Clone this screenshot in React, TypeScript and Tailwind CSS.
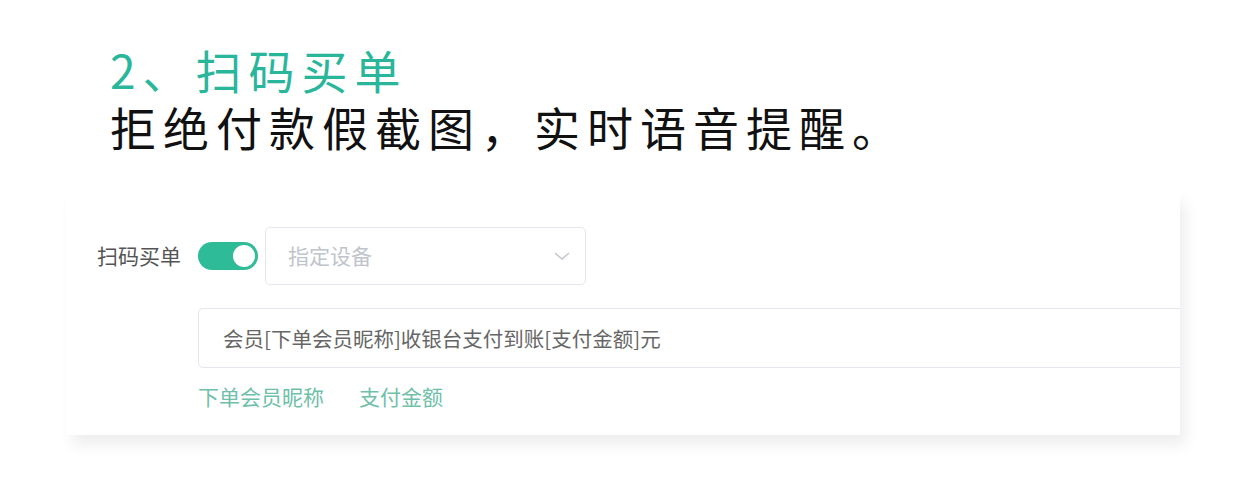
import { useState } from "react"

const cjk = "font-['Noto_Sans_CJK_SC','Noto_Sans',sans-serif]"

function Toggle({ on }: { on: boolean }) {
  return (
    <div
      className={`flex items-center w-[60px] h-[28px] rounded-full px-[3px] ${
        on ? "bg-[#2dbb98] justify-end" : "bg-[#dcdfe6] justify-start"
      }`}
    >
      <div className="w-[22px] h-[22px] rounded-full bg-white" />
    </div>
  )
}

export default function App() {
  const [enabled] = useState(true)
  const tags = ["下单会员昵称", "支付金额"]

  return (
    <div className={`w-[1242px] h-[480px] bg-white overflow-hidden ${cjk}`}>
      {/* Heading */}
      <div className="pl-[110px] pt-[41px] text-[46px] leading-[57px] tracking-[7px]">
        <div className="text-[#29b69b]">2、扫码买单</div>
        <div className="text-[#111]">拒绝付款假截图，实时语音提醒。</div>
      </div>

      {/* Settings card */}
      <div className="ml-[66px] mt-[38px] w-[1114px] h-[242px] bg-white overflow-hidden shadow-[6px_10px_14px_rgba(0,0,0,0.07)] pl-[31px] pt-[34px]">
        <div className="flex items-center h-[58px]">
          <span className="text-[21px] text-[#555] w-[101px]">扫码买单</span>
          <Toggle on={enabled} />
          <div className="ml-[7px] w-[321px] h-[58px] border border-[#e4e7ed] rounded-[5px] flex items-center justify-between pl-[22px] pr-[14px]">
            <span className="text-[21px] text-[#c0c4cc]">指定设备</span>
            <svg width="18" height="18" viewBox="0 0 18 18" fill="none">
              <path d="M2 6l7 6 7-6" stroke="#c0c4cc" strokeWidth="1.4" />
            </svg>
          </div>
        </div>

        <div className="ml-[101px] mt-[23px] w-[1100px] h-[60px] border border-[#e4e7ed] rounded-[5px] flex items-center pl-[24px]">
          <span className="text-[20.5px] text-[#666]">会员[下单会员昵称]收银台支付到账[支付金额]元</span>
        </div>

        <div className="ml-[101px] mt-[13px] flex gap-[35px]">
          {tags.map((t) => (
            <span key={t} className="text-[21px] text-[#6fc0a8]">
              {t}
            </span>
          ))}
        </div>
      </div>
    </div>
  )
}
